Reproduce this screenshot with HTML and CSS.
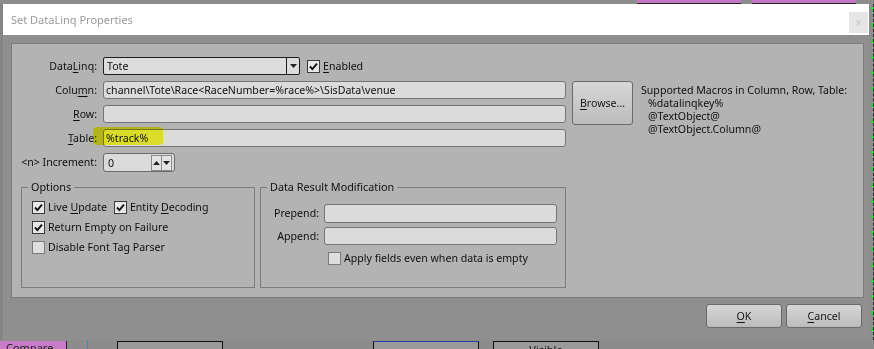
FILE: index.html
```html
<!DOCTYPE html>
<html lang="en">

<head>
    <meta charset="UTF-8">
    <title>Set DataLinq Properties</title>
    <link rel="stylesheet" href="styles.css">
</head>

<body>
    <div class="backdrop-top">
        <span class="bg-bar bar-a"></span>
        <span class="bg-bar bar-b"></span>
    </div>

    <div class="stage">
        <div class="edge-left"></div>

        <div class="dialog">
            <div class="titlebar">
                <span class="title">Set DataLinq Properties</span>
                <span class="close">x</span>
            </div>

            <div class="dialog-body">
                <div class="panel">
                    <div class="form-grid">
                        <label class="field-label">Data<u>L</u>inq:</label>
                        <div class="linq-row">
                            <div class="combo">
                                <span class="combo-value">Tote</span>
                                <span class="combo-btn">
                                    <svg width="7" height="4" viewBox="0 0 7 4"><path d="M0 0h7L3.5 4z" fill="#222"/></svg>
                                </span>
                            </div>
                            <span class="check on">
                                <svg width="11" height="11" viewBox="0 0 11 11"><path d="M2 5.5l2.4 2.6L9 2.6" fill="none" stroke="#111" stroke-width="1.9"/></svg>
                            </span>
                            <span class="check-text"><u>E</u>nabled</span>
                        </div>

                        <div class="macros">
                            <div>Supported Macros in Column, Row, Table:</div>
                            <div class="macro">%datalinqkey%</div>
                            <div class="macro">@TextObject@</div>
                            <div class="macro">@TextObject.Column@</div>
                        </div>

                        <label class="field-label">Colu<u>m</u>n:</label>
                        <div class="textbox">channel\Tote\Race&lt;RaceNumber=%race%&gt;\SisData\venue</div>
                        <button class="btn browse"><u>B</u>rowse...</button>

                        <label class="field-label"><u>R</u>ow:</label>
                        <div class="textbox"></div>

                        <label class="field-label"><u>T</u>able:</label>
                        <div class="textbox">%track%</div>

                        <label class="field-label">&lt;n&gt; Increment:</label>
                        <div class="spinner">
                            <span class="spin-value">0</span>
                            <span class="spin-btn">
                                <svg width="7" height="4" viewBox="0 0 7 4"><path d="M0 4h7L3.5 0z" fill="#222"/></svg>
                            </span>
                            <span class="spin-btn">
                                <svg width="7" height="4" viewBox="0 0 7 4"><path d="M0 0h7L3.5 4z" fill="#222"/></svg>
                            </span>
                        </div>
                    </div>

                    <div class="groups">
                        <fieldset class="group group-options">
                            <legend>Options</legend>
                            <div class="opt-row">
                                <span class="opt">
                                    <span class="check on">
                                        <svg width="11" height="11" viewBox="0 0 11 11"><path d="M2 5.5l2.4 2.6L9 2.6" fill="none" stroke="#111" stroke-width="1.9"/></svg>
                                    </span>
                                    <span class="check-text">Live <u>U</u>pdate</span>
                                </span>
                                <span class="opt">
                                    <span class="check on">
                                        <svg width="11" height="11" viewBox="0 0 11 11"><path d="M2 5.5l2.4 2.6L9 2.6" fill="none" stroke="#111" stroke-width="1.9"/></svg>
                                    </span>
                                    <span class="check-text">Entity <u>D</u>ecoding</span>
                                </span>
                            </div>
                            <div class="opt-row">
                                <span class="opt">
                                    <span class="check on">
                                        <svg width="11" height="11" viewBox="0 0 11 11"><path d="M2 5.5l2.4 2.6L9 2.6" fill="none" stroke="#111" stroke-width="1.9"/></svg>
                                    </span>
                                    <span class="check-text">Return Empty on Failure</span>
                                </span>
                            </div>
                            <div class="opt-row">
                                <span class="opt">
                                    <span class="check"></span>
                                    <span class="check-text">Disable Font Tag Parser</span>
                                </span>
                            </div>
                        </fieldset>

                        <fieldset class="group group-result">
                            <legend>Data Result Modification</legend>
                            <div class="result-row">
                                <label class="result-label">Prepend:</label>
                                <div class="textbox tall"></div>
                            </div>
                            <div class="result-row">
                                <label class="result-label">Append:</label>
                                <div class="textbox"></div>
                            </div>
                            <div class="apply-row">
                                <span class="check"></span>
                                <span class="check-text">Apply fields even when data is empty</span>
                            </div>
                        </fieldset>
                    </div>

                    <span class="marker"></span>
                </div>

                <div class="actions">
                    <button class="btn action"><u>O</u>K</button>
                    <button class="btn action"><u>C</u>ancel</button>
                </div>
            </div>
        </div>

        <div class="edge-right"></div>
    </div>

    <div class="backdrop-bottom">
        <span class="bg-compare">Compare</span>
        <span class="bg-line"></span>
        <span class="bg-box box-a"></span>
        <span class="bg-box box-b"></span>
        <span class="bg-box box-c">Visible</span>
    </div>
</body>

</html>
```

FILE: styles.css
```css
body {
    margin: 0;
    width: 874px;
    height: 349px;
    overflow: hidden;
    background-color: #8c8c8c;
    font-family: "Noto Sans", "Open Sans", sans-serif;
    font-size: 10.6px;
    color: #0f0f0f;
}
u {
    text-decoration-thickness: 1px;
    text-underline-offset: 2px;
}

/* bits of the app behind the dialog */
.backdrop-top {
    display: flex;
    height: 4px;
}
.bg-bar {
    height: 3px;
    background-color: #c477c4;
    border-bottom: 1px solid #222;
}
.bar-a {
    margin-left: 637px;
    width: 104px;
}
.bar-b {
    margin-left: 11px;
    width: 104px;
}
.stage {
    display: flex;
    height: 336px;
}
.edge-left {
    width: 3px;
    background-color: #858585;
}
.edge-right {
    width: 5px;
    background-color: #8d8d8d;
    background-image: radial-gradient(circle at 4px 5px, #2fd23a 1.6px, transparent 2px);
    background-size: 5px 16px;
    border-right: 1px dashed #222;
    box-sizing: border-box;
}
.backdrop-bottom {
    display: flex;
    height: 9px;
    align-items: flex-end;
}
.bg-compare {
    width: 66px;
    height: 8px;
    overflow: hidden;
    background-color: #c77cc7;
    border-right: 1px solid #222;
    color: #222;
    font-size: 11px;
    line-height: 13px;
    text-indent: 6px;
}
.bg-line {
    width: 1px;
    height: 9px;
    margin-left: 20px;
    background-color: #2e8fd0;
}
.bg-box {
    height: 7px;
    border: 1px solid #111;
    border-bottom: none;
    background-color: #9a9a9a;
    overflow: hidden;
    font-size: 11px;
    line-height: 16px;
    text-align: center;
}
.box-a {
    margin-left: 29px;
    width: 104px;
}
.box-b {
    margin-left: 150px;
    width: 104px;
    border-top-color: #2a3fa0;
}
.box-c {
    margin-left: 14px;
    width: 104px;
}

/* dialog */
.dialog {
    width: 866px;
    display: flex;
    flex-direction: column;
    background-color: #8f8f8f;
}
.titlebar {
    height: 31px;
    background-color: #ffffff;
    display: flex;
    align-items: flex-start;
    justify-content: space-between;
}
.title {
    margin-left: 8px;
    margin-top: 8px;
    color: #9a9a9a;
    font-size: 11px;
}
.close {
    width: 19px;
    height: 21px;
    margin-top: 8px;
    margin-right: 1px;
    background-color: #e6e6e6;
    color: #c9c9c9;
    font-size: 11px;
    line-height: 19px;
    text-align: center;
}
.dialog-body {
    flex: 1;
    padding: 8px 5px 12px 8px;
}
.panel {
    position: relative;
    height: 255px;
    box-sizing: border-box;
    border: 1px solid #7b7b7b;
    background-color: #b3b3b3;
    padding: 13px 0 0 9px;
}

/* top form */
.form-grid {
    display: grid;
    grid-template-columns: 76px 463px 61px 1fr;
    grid-template-rows: 18px 18px 18px 18px 19px;
    column-gap: 6px;
    row-gap: 6px;
}
.field-label {
    grid-column: 1;
    text-align: right;
    line-height: 18px;
    white-space: nowrap;
}
.form-grid .textbox,
.spinner {
    grid-column: 2;
}
.linq-row {
    grid-column: 2 / span 2;
    grid-row: 1;
    display: flex;
    align-items: center;
}
.combo {
    width: 197px;
    height: 18px;
    box-sizing: border-box;
    border: 1px solid #1e1e1e;
    border-radius: 2px;
    background-color: #dcdcdc;
    display: flex;
}
.combo-value {
    flex: 1;
    padding-left: 3px;
    line-height: 16px;
}
.combo-btn {
    width: 12px;
    border-left: 1px solid #1e1e1e;
    display: flex;
    align-items: center;
    justify-content: center;
}
.linq-row .check {
    margin-left: 7px;
}
.textbox {
    height: 18px;
    box-sizing: border-box;
    border: 1px solid #747474;
    border-radius: 3px;
    background-color: #dbdbdb;
    padding-left: 2px;
    line-height: 16px;
    white-space: nowrap;
    overflow: hidden;
}
.textbox.tall {
    height: 19px;
}
.btn {
    font-family: inherit;
    font-size: 10.6px;
    color: #141414;
    border: 1px solid #6a6a6a;
    border-radius: 3px;
    background: linear-gradient(#d6d6d6, #bcbcbc);
    padding: 0;
}
.browse {
    grid-column: 3;
    grid-row: 2 / span 2;
    margin-bottom: -2px;
}
.macros {
    grid-column: 4;
    grid-row: 2 / span 4;
    padding: 3px 0 0 2px;
    line-height: 13px;
    white-space: nowrap;
}
.macro {
    padding-left: 7px;
}
.spinner {
    width: 72px;
    height: 19px;
    box-sizing: border-box;
    border: 1px solid #6a6a6a;
    border-radius: 3px;
    background-color: #dbdbdb;
    display: flex;
    align-items: center;
    padding-right: 2px;
}
.spin-value {
    flex: 1;
    padding-left: 4px;
}
.spin-btn {
    width: 9px;
    height: 14px;
    border: 1px solid #8a8a8a;
    background-color: #e4e4e4;
    display: flex;
    align-items: center;
    justify-content: center;
}
.spin-btn + .spin-btn {
    border-left: none;
}

/* checkboxes */
.check {
    width: 13px;
    height: 13px;
    box-sizing: border-box;
    border: 1px solid #7a7a7a;
    background-color: #dedede;
    display: inline-flex;
    align-items: center;
    justify-content: center;
    flex-shrink: 0;
}
.check.on {
    border-color: #3a3a3a;
    background-color: #e8e8e8;
}
.check-text {
    margin-left: 3px;
    white-space: nowrap;
}

/* groups */
.groups {
    display: flex;
    gap: 5px;
    margin-top: 8px;
}
.group {
    margin: 0;
    height: 108px;
    box-sizing: border-box;
    border: 1px solid #7d7d7d;
    min-width: 0;
}
.group legend {
    padding: 0 3px;
    margin-left: 6px;
    line-height: 14px;
    font-size: 10.8px;
}
.group-options legend {
    margin-left: -4px;
}
.group-options {
    width: 234px;
    padding: 5px 0 0 10px;
}
.opt-row {
    display: flex;
    gap: 7px;
    height: 16px;
    align-items: center;
    margin-bottom: 4px;
}
.opt {
    display: flex;
    align-items: center;
}
.group-result {
    width: 306px;
    padding: 10px 8px 0 0;
}
.result-row {
    display: flex;
    gap: 5px;
    margin-bottom: 4px;
}
.result-row .textbox {
    width: 233px;
}
.result-label {
    width: 58px;
    text-align: right;
    line-height: 18px;
}
.apply-row {
    display: flex;
    align-items: center;
    height: 16px;
    margin-top: 5px;
    padding-left: 67px;
}

/* yellow highlighter stroke over the Table row */
.marker {
    position: absolute;
    left: 81px;
    top: 83px;
    width: 70px;
    height: 18px;
    border-radius: 4px;
    background-color: #ffff30;
    mix-blend-mode: multiply;
}

.actions {
    display: flex;
    justify-content: flex-end;
    gap: 4px;
    margin-top: 6px;
    margin-right: 2px;
}
.action {
    width: 76px;
    height: 24px;
}
```
